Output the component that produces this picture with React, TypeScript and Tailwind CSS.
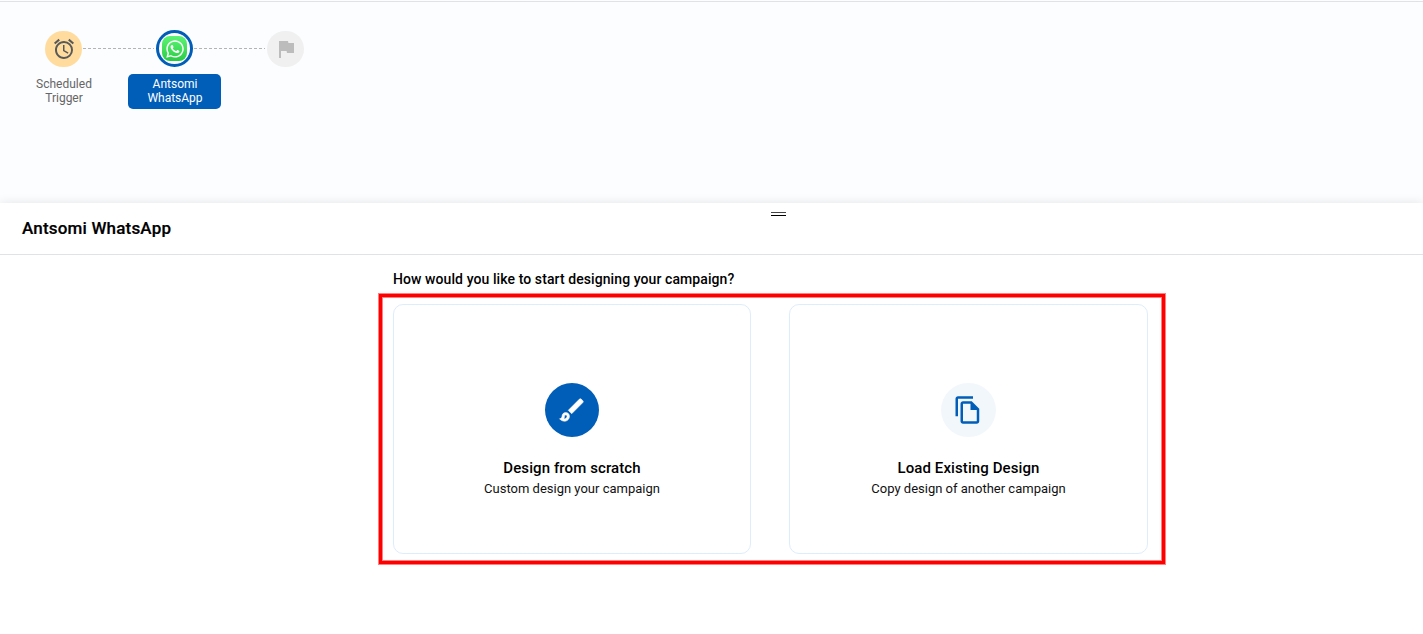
import { MdAlarm, MdFlag, MdOutlineBrush, MdOutlineFileCopy } from "react-icons/md";
import { FaWhatsapp } from "react-icons/fa";
import type { ReactNode } from "react";

function Connector({ width }: { width: string }) {
  return (
    <div
      className={`mt-[18px] h-px shrink-0 bg-[repeating-linear-gradient(90deg,#b4b4b4_0_3px,transparent_3px_5px)] ${width}`}
    />
  );
}

type ChoiceProps = {
  icon: ReactNode;
  title: string;
  text: string;
  circle: string;
  width: string;
};

function Choice({ icon, title, text, circle, width }: ChoiceProps) {
  return (
    <button
      className={`flex h-[250px] flex-col items-center rounded-[10px] border border-[#deedfb] bg-white pt-[78px] ${width}`}
    >
      <span className={`flex h-[54px] items-center justify-center rounded-full ${circle}`}>{icon}</span>
      <span className="mt-[21px] text-[15px] leading-5 font-medium tracking-[0.1px] text-black">{title}</span>
      <span className="mt-[2px] text-[13px] leading-[18px] text-[#111111]">{text}</span>
    </button>
  );
}

export default function App() {
  return (
    <div className="flex h-[634px] w-[1423px] flex-col overflow-hidden bg-white font-['Roboto',sans-serif] text-black">
      <section className="h-[203px] shrink-0 bg-[#fcfdff] pt-px">
        <div className="h-px bg-[#e0e2e5]" />
        <div className="flex items-start pt-[28px] pl-[45px]">
          <div className="flex w-[37px] shrink-0 flex-col items-center pt-px">
            <div className="flex h-[36px] w-[37px] items-center justify-center rounded-full bg-[#ffdc9e]">
              <MdAlarm className="size-6 text-[#595959]" />
            </div>
            <div className="mt-[10px] pl-px text-center text-xs leading-[14px] whitespace-nowrap text-[#666666]">
              Scheduled
              <br />
              Trigger
            </div>
          </div>
          <div className="w-px shrink-0" />
          <Connector width="w-[71px]" />
          <div className="-mr-[27px] -ml-[26px] flex w-[93px] shrink-0 flex-col items-center">
            <div className="flex size-[37px] items-center justify-center rounded-full border-[3px] border-[#005eb8] bg-white">
              <div className="flex size-[25px] items-center justify-center rounded-[8px] bg-linear-to-b from-[#5cf475] to-[#25cd43]">
                <FaWhatsapp className="size-5 text-white" />
              </div>
            </div>
            <div className="mt-[7px] h-[35px] w-[93px] rounded-[5px] bg-[#005eb8] pt-[3px] pl-px text-center text-xs leading-[14px] text-white">
              Antsomi
              <br />
              WhatsApp
            </div>
          </div>
          <Connector width="w-[71px]" />
          <div className="mt-px ml-[2px] flex h-[36px] w-[37px] shrink-0 items-center justify-center rounded-full bg-[#f0f0f0]">
            <MdFlag className="size-6 text-[#bcbcbc]" />
          </div>
        </div>
      </section>

      <section className="relative flex-1 bg-white shadow-[0_0_10px_rgba(0,0,0,0.1)]">
        <header className="flex h-[52px] items-start border-b border-[#e0e2e5] pl-[22px]">
          <h1 className="w-[749px] pt-[15px] text-[17px] leading-5 font-medium tracking-[0.18px] [-webkit-text-stroke:0.2px_black]">
            Antsomi WhatsApp
          </h1>
          <div className="mt-[9px] h-[4px] w-[15px] border-t border-b border-t-[#444444] border-b-black" />
        </header>
        <main className="pt-[14px] pl-[379px]">
          <h2 className="pl-[14px] text-[14px] leading-5 font-medium tracking-[0.085px]">
            How would you like to start designing your campaign?
          </h2>
          <div className="mt-[5px] flex h-[270px] w-[786px] gap-[38px] border-[3px] border-[#ff0000] pt-[7px] pl-[11px] shadow-[0_0_0_1px_#ff8080,inset_0_0_0_1px_#ff8080]">
            <Choice
              width="w-[358px]"
              circle="w-[54px] bg-[#005eb8]"
              icon={
                <MdOutlineBrush className="size-[30px] text-white [&>path:last-child]:stroke-white [&>path:last-child]:stroke-[0.4]" />
              }
              title="Design from scratch"
              text="Custom design your campaign"
            />
            <Choice
              width="w-[359px]"
              circle="w-[55px] bg-[#f2f7fc] pr-px"
              icon={<MdOutlineFileCopy className="size-[30px] text-[#005eb8]" />}
              title="Load Existing Design"
              text="Copy design of another campaign"
            />
          </div>
        </main>
      </section>
    </div>
  );
}
